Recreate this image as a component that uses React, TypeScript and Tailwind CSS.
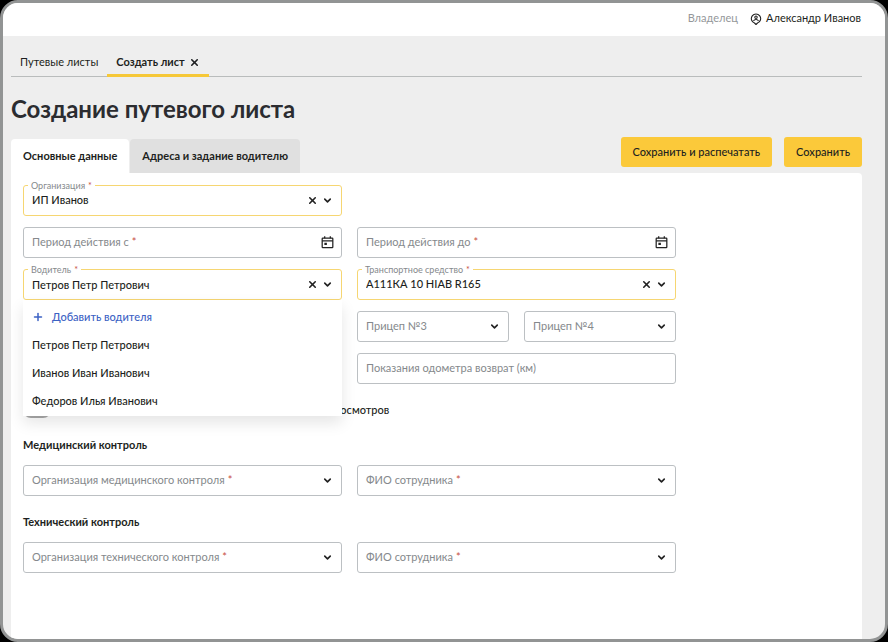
import { useState, type ReactNode } from "react";
import { ChevronDown, Plus, X } from "lucide-react";
import clsx from "clsx";

const drivers = ["Петров Петр Петрович", "Иванов Иван Иванович", "Федоров Илья Иванович"];

const CalendarIcon = () => (
  <svg viewBox="0 0 24 24" className="size-[15px]" fill="none" stroke="#222" strokeWidth="2" aria-hidden="true">
    <rect x="3.5" y="5" width="17" height="15" rx="1" />
    <path d="M3.5 9.5h17M7.5 2v3M16.5 2v3" />
    <path d="M7 12.5h4v3.5h-4z" fill="#222" stroke="none" />
  </svg>
);

const UserPinIcon = () => (
  <svg viewBox="0 0 24 24" className="size-3" fill="none" stroke="#222" strokeWidth="2.2" aria-hidden="true">
    <path d="M12 23l-3-3a9.3 9.3 0 1 1 6 0z" strokeLinejoin="round" />
    <circle cx="12" cy="8.5" r="2.4" />
    <path d="M7 16c1-2.2 3-3 5-3s4 .8 5 3" />
  </svg>
);

interface FieldProps {
  id: string;
  label: string;
  required?: boolean;
  filled?: boolean;
  className?: string;
  children: ReactNode;
}

// Обводка и подпись поля. У заполненного поля подпись стоит на рамке.
const Field = ({ id, label, required, filled, className, children }: FieldProps) => (
  <div
    className={clsx(
      "relative flex h-[31px] items-center rounded-[3px] border bg-white",
      filled ? "border-[#f6d672]" : "border-[#bcc0c3]",
      className
    )}
  >
    {children}
    <label
      htmlFor={id}
      className={clsx(
        "pointer-events-none absolute whitespace-nowrap text-[#85898c]",
        filled ? "-top-[6px] left-1 bg-white px-[3px] text-[9px] leading-3" : "inset-y-0 left-2 flex items-center text-[11px]"
      )}
    >
      {label}
      {required && <span className="ml-[3px] text-[#c8503f]">*</span>}
    </label>
  </div>
);

const controlClass = "h-full w-full min-w-0 flex-1 appearance-none bg-transparent pl-2 text-[11px] font-medium text-[#1d1f21] outline-none";

interface SelectFieldProps {
  id: string;
  label: string;
  required?: boolean;
  initial?: string;
  className?: string;
}

const SelectField = ({ id, label, required, initial = "", className }: SelectFieldProps) => {
  const [value, setValue] = useState(initial);

  return (
    <Field id={id} label={label} required={required} filled={value !== ""} className={className}>
      <select id={id} value={value} onChange={(e) => setValue(e.target.value)} className={controlClass}>
        <option value="" />
        {initial && <option>{initial}</option>}
      </select>
      {value && (
        <button type="button" aria-label="Очистить" className="shrink-0" onClick={() => setValue("")}>
          <X className="size-[11px] text-[#222]" strokeWidth={3.5} />
        </button>
      )}
      <ChevronDown className="pointer-events-none mr-2 ml-1 size-[11px] shrink-0 text-[#222]" strokeWidth={3.5} />
    </Field>
  );
};

const DateField = ({ id, label }: { id: string; label: string }) => {
  const [value, setValue] = useState("");

  return (
    <Field id={id} label={label} required filled={value !== ""}>
      <input id={id} type="text" value={value} onChange={(e) => setValue(e.target.value)} className={controlClass} />
      <button type="button" aria-label="Открыть календарь" className="mr-[6px] shrink-0">
        <CalendarIcon />
      </button>
    </Field>
  );
};

const TextField = ({ id, label }: { id: string; label: string }) => {
  const [value, setValue] = useState("");

  return (
    <Field id={id} label={label} filled={value !== ""}>
      <input id={id} type="text" value={value} onChange={(e) => setValue(e.target.value)} className={controlClass} />
    </Field>
  );
};

const DriverField = () => {
  const [value, setValue] = useState(drivers[0]);
  const [open, setOpen] = useState(true);

  const choose = (name: string) => {
    setValue(name);
    setOpen(false);
  };

  return (
    <div className="relative">
      <Field id="driver" label="Водитель" required filled={value !== ""}>
        <input
          id="driver"
          type="text"
          role="combobox"
          aria-expanded={open}
          aria-controls="driver-list"
          value={value}
          onChange={(e) => setValue(e.target.value)}
          className={controlClass}
        />
        <button type="button" aria-label="Очистить" className="shrink-0" onClick={() => setValue("")}>
          <X className="size-[11px] text-[#222]" strokeWidth={3.5} />
        </button>
        <button type="button" aria-label="Показать список" className="mr-2 ml-1 shrink-0" onClick={() => setOpen(!open)}>
          <ChevronDown className="size-[11px] text-[#222]" strokeWidth={3.5} />
        </button>
      </Field>

      {open && (
        <div className="absolute inset-x-0 top-full z-10 bg-white pt-[3px] pb-px shadow-[0_7px_14px_rgba(0,0,0,0.1)]">
          <button type="button" className="flex h-7 w-full items-center gap-2 px-[9px] text-[11px] font-medium text-[#3c62c4]">
            <Plus className="size-3" strokeWidth={3} />
            Добавить водителя
          </button>
          <ul id="driver-list" role="listbox" aria-label="Водитель">
            {drivers.map((name) => (
              <li key={name} role="option" aria-selected={name === value}>
                <button
                  type="button"
                  className="flex h-7 w-full items-center px-[9px] text-[11px] font-medium text-[#1d1f21]"
                  onClick={() => choose(name)}
                >
                  {name}
                </button>
              </li>
            ))}
          </ul>
        </div>
      )}
    </div>
  );
};

const App = () => {
  return (
    <div className="flex min-h-screen flex-col bg-black font-['Lato','Noto_Sans',sans-serif] text-[11px] text-[#1d1f21]">
      <div className="flex flex-1 flex-col overflow-hidden rounded-[18px] border-[3px] border-[#929494] bg-[#eeeeee]">
        <header className="flex h-[33px] items-center justify-end gap-3 bg-white pr-6 pb-[2px]">
          <span className="text-[#94979a]">Владелец</span>
          <span className="flex items-center gap-1">
            <UserPinIcon />
            Александр Иванов
          </span>
        </header>

        <main className="flex flex-1 flex-col pr-[23px] pl-2">
          <nav className="mt-4 flex h-[25px] border-b border-[#b9bcbc]">
            <a href="#list" className="flex items-center px-[9px] pb-[3px]">
              Путевые листы
            </a>
            <div className="-mb-px flex items-center gap-1 border-b-[3px] border-[#f6c838] px-[9px] pb-px">
              <a href="#create" aria-current="page" className="font-bold">
                Создать лист
              </a>
              <button type="button" aria-label="Закрыть вкладку">
                <X className="size-[11px]" strokeWidth={3.5} />
              </button>
            </div>
          </nav>

          <h1 className="mt-4 text-2xl font-bold text-[#2b2c30]">Создание путевого листа</h1>

          <div className="mt-3 flex items-end justify-between">
            <div role="tablist" className="flex gap-px">
              <button type="button" role="tab" aria-selected="true" className="h-[34px] rounded-t-sm bg-white px-3 font-bold">
                Основные данные
              </button>
              <button type="button" role="tab" aria-selected="false" className="h-[34px] rounded-t-sm bg-[#e0e0e0] px-3 font-bold">
                Адреса и задание водителю
              </button>
            </div>
            <div className="mb-[6px] flex gap-3">
              <button type="button" className="h-[30px] rounded-[3px] bg-[#fbc93a] px-3 font-medium">
                Сохранить и распечатать
              </button>
              <button type="button" className="h-[30px] rounded-[3px] bg-[#fbc93a] px-3 font-medium">
                Сохранить
              </button>
            </div>
          </div>

          <form className="flex-1 rounded-tr-sm bg-white px-3 pt-3 pb-16">
            <div className="grid max-w-[653px] grid-cols-2 gap-x-[15px] gap-y-[11px]">
              <SelectField id="org" label="Организация" required initial="ИП Иванов" className="col-start-1" />
              <div />
              <DateField id="from" label="Период действия с" />
              <DateField id="to" label="Период действия до" />
              <DriverField />
              <SelectField id="vehicle" label="Транспортное средство" required initial="А111КА 10 HIAB R165" />
              <div className="grid grid-cols-2 gap-[15px]">
                <SelectField id="trailer1" label="Прицеп №1" />
                <SelectField id="trailer2" label="Прицеп №2" />
              </div>
              <div className="grid grid-cols-2 gap-[15px]">
                <SelectField id="trailer3" label="Прицеп №3" />
                <SelectField id="trailer4" label="Прицеп №4" />
              </div>
              <TextField id="odo-out" label="Показания одометра выезд (км)" />
              <TextField id="odo-in" label="Показания одометра возврат (км)" />
            </div>

            <label className="mt-[18px] flex h-4 w-fit items-center gap-[7px] font-medium whitespace-nowrap">
              <input type="checkbox" role="switch" className="h-4 w-7 appearance-none rounded-full bg-[#a9a9a9] checked:bg-[#f6c838]" />
              Данные прохождения предрейсовых и послерейсовых осмотров
            </label>

            <h2 className="mt-[19px] font-bold">Медицинский контроль</h2>
            <div className="mt-[11px] grid max-w-[653px] grid-cols-2 gap-[15px]">
              <SelectField id="med-org" label="Организация медицинского контроля" required />
              <SelectField id="med-name" label="ФИО сотрудника" required />
            </div>

            <h2 className="mt-[18px] font-bold">Технический контроль</h2>
            <div className="mt-3 grid max-w-[653px] grid-cols-2 gap-[15px]">
              <SelectField id="tech-org" label="Организация технического контроля" required />
              <SelectField id="tech-name" label="ФИО сотрудника" required />
            </div>
          </form>
        </main>
      </div>
    </div>
  );
};

export default App;
